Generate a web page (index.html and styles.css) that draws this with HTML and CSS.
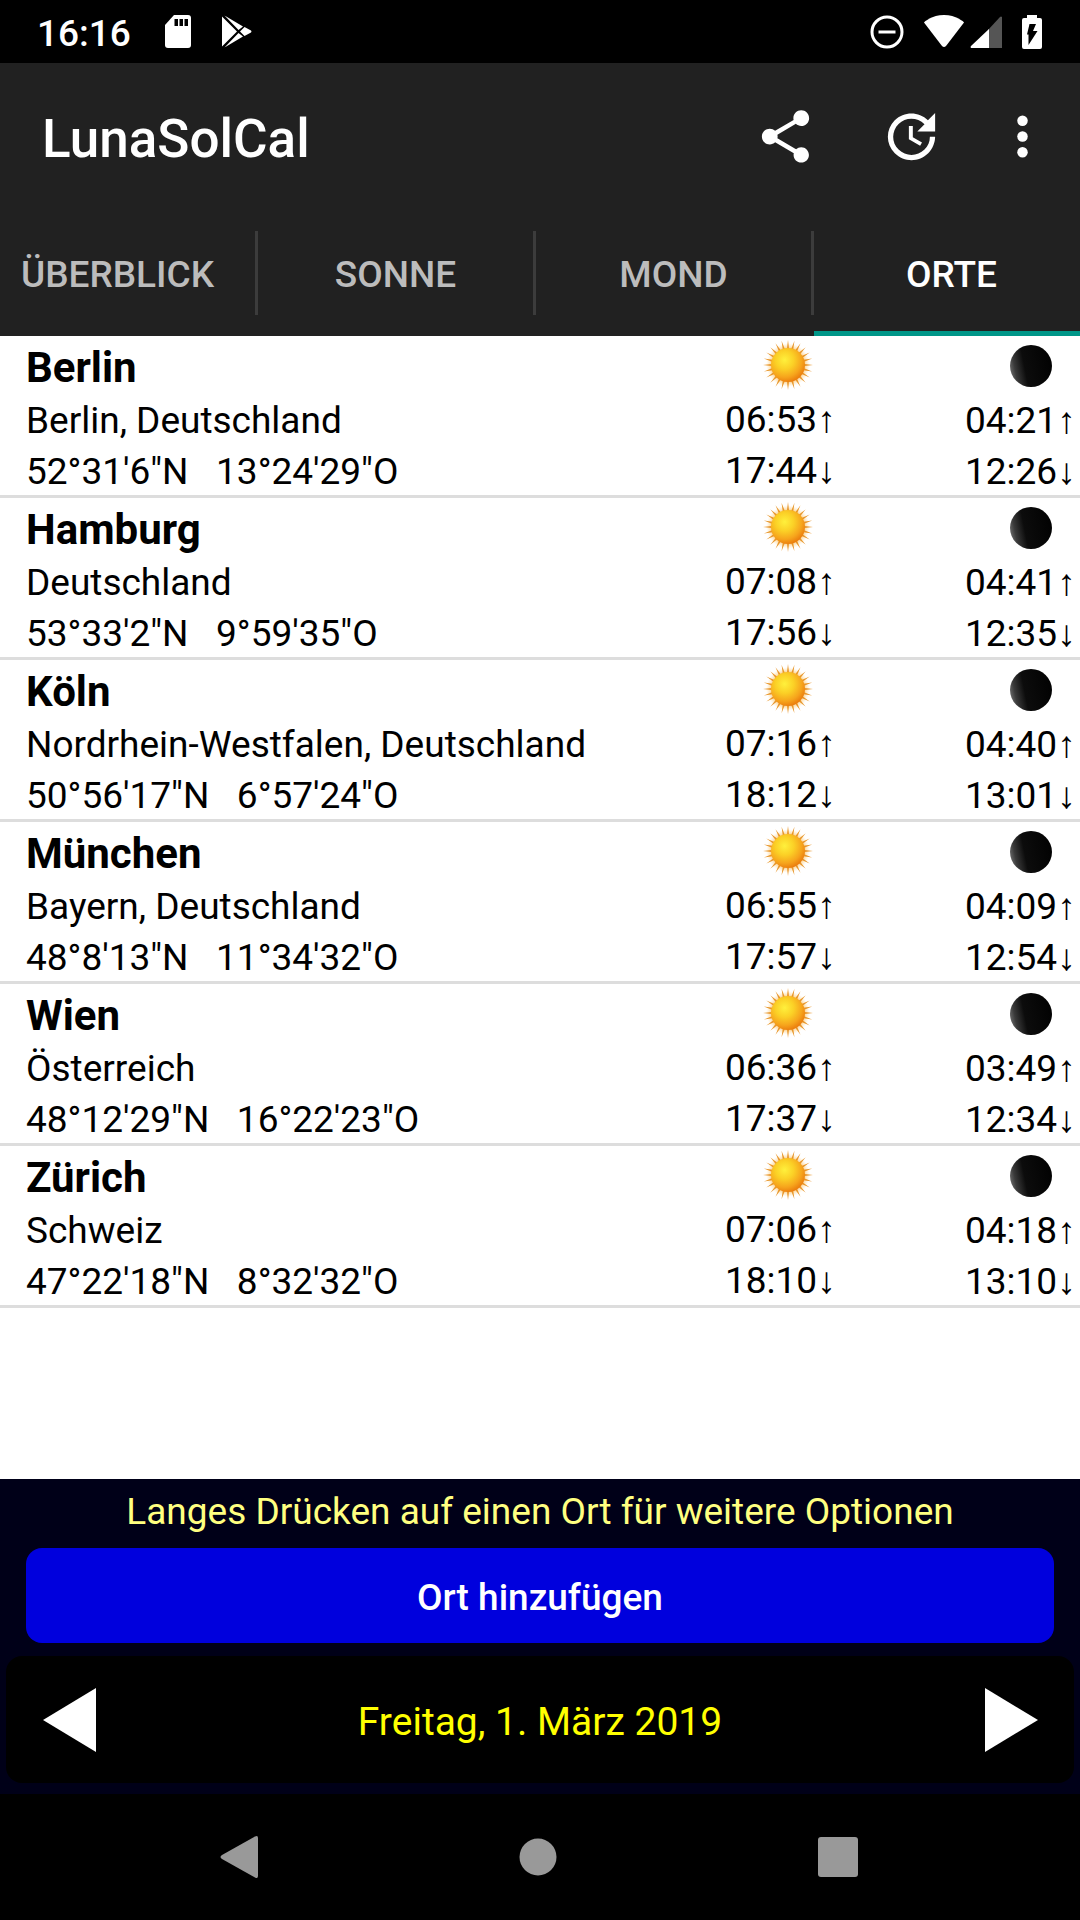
FILE: index.html
```html
<!DOCTYPE html>
<html lang="de">
<head>
<meta charset="utf-8">
<meta name="viewport" content="width=device-width, initial-scale=1">
<title>LunaSolCal</title>
<link rel="stylesheet" href="styles.css">
</head>
<body>
<svg class="defs" width="0" height="0" aria-hidden="true">
  <defs>
    <radialGradient id="sun-fill" cx="0.4" cy="0.35" r="0.68">
      <stop offset="0" stop-color="#fff03c"/>
      <stop offset="0.4" stop-color="#fbd026"/>
      <stop offset="0.75" stop-color="#f6a41c"/>
      <stop offset="1" stop-color="#ea7a0c"/>
    </radialGradient>
    <radialGradient id="sun-glow" cx="0.5" cy="0.5" r="0.5">
      <stop offset="0.7" stop-color="#f9b040" stop-opacity="0.8"/>
      <stop offset="1" stop-color="#ffe0a0" stop-opacity="0"/>
    </radialGradient>
    <linearGradient id="moon-fill" x1="0" y1="0.6" x2="1" y2="0.4">
      <stop offset="0" stop-color="#6a6a6a"/>
      <stop offset="0.12" stop-color="#3a3a3a"/>
      <stop offset="0.35" stop-color="#0c0c0c"/>
      <stop offset="1" stop-color="#020202"/>
    </linearGradient>
    <symbol id="sun" viewBox="-25 -25 50 50">
      <circle r="22" fill="url(#sun-glow)"/>
      <g fill="#e8962a">
        <path id="ray" d="M0-25L3 0 0 25-3 0Z"/>
        <use href="#ray" transform="rotate(15)"/>
        <use href="#ray" transform="rotate(30)"/>
        <use href="#ray" transform="rotate(45)"/>
        <use href="#ray" transform="rotate(60)"/>
        <use href="#ray" transform="rotate(75)"/>
        <use href="#ray" transform="rotate(90)"/>
        <use href="#ray" transform="rotate(105)"/>
        <use href="#ray" transform="rotate(120)"/>
        <use href="#ray" transform="rotate(135)"/>
        <use href="#ray" transform="rotate(150)"/>
        <use href="#ray" transform="rotate(165)"/>
      </g>
      <circle r="17" fill="url(#sun-fill)"/>
    </symbol>
    <symbol id="moon" viewBox="-25 -25 50 50">
      <circle r="21" fill="url(#moon-fill)"/>
    </symbol>
  </defs>
</svg>

<div class="status">
  <time class="clock">16:16</time>
  <svg class="status-sd" width="26" height="34" viewBox="0 0 26 34" aria-hidden="true">
    <path fill="#fff" d="M9 0H23a3 3 0 0 1 3 3V30a3 3 0 0 1-3 3H3a3 3 0 0 1-3-3V10Z"/>
    <path d="M9.500 4h3.500v7h-3.500zM14.500 4h3.500v7h-3.500zM19.500 4h3.500v7h-3.500z"/>
  </svg>
  <svg width="30" height="34" viewBox="0 0 30 34" fill="#fff" aria-hidden="true">
    <path d="M0 1.500 15 16.500 0 31.500ZM2.500.5 21 11.500 16.500 15ZM2.500 32.500 16.500 18 21 21.500ZM22.500 12 29 15.500q1 1 0 2L22.500 21 18 16.500Z"/>
  </svg>
  <div class="status-right">
    <svg class="status-dnd" width="34" height="34" viewBox="0 0 34 34" fill="none" stroke="#fff" stroke-width="3" aria-hidden="true">
      <circle cx="17" cy="17" r="15"/><path d="M8.500 17h17"/>
    </svg>
    <svg class="status-wifi" width="42" height="34" viewBox="0 0 42 34" aria-hidden="true">
      <path fill="#fff" d="M21 0C33 0 41 7 41 7.500L23 31q-2 2-4 0L1 7.500C1 7 9 0 21 0Z"/>
    </svg>
    <svg class="status-signal" width="32" height="32" viewBox="0 0 32 32" aria-hidden="true">
      <path fill="#555" d="M32 1V32H18V14L30 1q1-1 2 0Z"/>
      <path fill="#fff" d="M19 13V32H1q-1-1 0-2Z"/>
    </svg>
    <svg width="20" height="34" viewBox="0 0 20 34" aria-hidden="true">
      <path fill="#fff" d="M5 0h10v3h3a2 2 0 0 1 2 2v27a2 2 0 0 1-2 2H2a2 2 0 0 1-2-2V5a2 2 0 0 1 2-2h3z"/>
      <path d="M7.500 9H14L11 16h4.500L6.500 30V19.500H5Z"/>
    </svg>
  </div>
</div>

<header class="appbar">
  <h1 class="title">LunaSolCal</h1>
  <button class="action" type="button" aria-label="Teilen">
    <svg width="63" height="63" viewBox="0 0 24 24" fill="#fff"><path d="M18 16.080c-.76 0-1.440.3-1.960.77L8.910 12.700c.05-.23.09-.46.09-.7s-.04-.47-.09-.7l7.050-4.110c.54.5 1.250.81 2.040.81 1.660 0 3-1.340 3-3s-1.340-3-3-3-3 1.340-3 3c0 .24.04.47.09.7L8.040 9.810C7.500 9.310 6.790 9 6 9c-1.660 0-3 1.340-3 3s1.340 3 3 3c.79 0 1.500-.31 2.040-.81l7.120 4.160c-.05.21-.08.43-.08.65 0 1.610 1.310 2.920 2.920 2.920 1.610 0 2.920-1.310 2.920-2.920s-1.310-2.920-2.920-2.920z"/></svg>
  </button>
  <button class="action" type="button" aria-label="Aktualisieren">
    <svg width="63" height="63" viewBox="0 0 24 24" fill="#fff"><path d="M21 10.120h-6.780l2.740-2.820c-2.730-2.700-7.150-2.800-9.880-.1-2.730 2.710-2.730 7.080 0 9.790s7.150 2.710 9.880 0C18.320 15.650 19 14.080 19 12.100h2c0 1.980-.88 4.550-2.640 6.290-3.510 3.480-9.210 3.480-12.720 0-3.500-3.470-3.530-9.110-.02-12.580s9.140-3.470 12.650 0L21 3v7.120zM12.500 8v4.250l3.500 2.080-.72 1.210L11 13V8h1.500z"/></svg>
  </button>
  <button class="action action-more" type="button" aria-label="Mehr">
    <svg width="63" height="63" viewBox="0 0 24 24" fill="#fff"><circle cx="12" cy="6" r="2"/><circle cx="12" cy="12" r="2"/><circle cx="12" cy="18" r="2"/></svg>
  </button>
</header>

<div class="tabs">
  <nav class="tab-strip">
    <a class="tab" href="#ueberblick"><span class="tab-label">ÜBERBLICK</span></a>
    <a class="tab" href="#sonne"><span class="tab-label">SONNE</span></a>
    <a class="tab" href="#mond"><span class="tab-label">MOND</span></a>
    <a class="tab tab-active" href="#orte" aria-current="page"><span class="tab-label">ORTE</span></a>
  </nav>
</div>

<main class="places">
  <ul class="list">
    <li class="place">
      <div class="info"><h2 class="name">Berlin</h2><p class="line">Berlin, Deutschland</p><p class="line">52°31'6"N   13°24'29"O</p></div>
      <div class="times sun"><svg class="orb"><use href="#sun"/></svg><p class="line">06:53<span class="arrow">↑</span></p><p class="line">17:44<span class="arrow">↓</span></p></div>
      <div class="times moon"><svg class="orb"><use href="#moon"/></svg><p class="line">04:21<span class="arrow">↑</span></p><p class="line">12:26<span class="arrow">↓</span></p></div>
    </li>
    <li class="place">
      <div class="info"><h2 class="name">Hamburg</h2><p class="line">Deutschland</p><p class="line">53°33'2"N   9°59'35"O</p></div>
      <div class="times sun"><svg class="orb"><use href="#sun"/></svg><p class="line">07:08<span class="arrow">↑</span></p><p class="line">17:56<span class="arrow">↓</span></p></div>
      <div class="times moon"><svg class="orb"><use href="#moon"/></svg><p class="line">04:41<span class="arrow">↑</span></p><p class="line">12:35<span class="arrow">↓</span></p></div>
    </li>
    <li class="place">
      <div class="info"><h2 class="name">Köln</h2><p class="line">Nordrhein-Westfalen, Deutschland</p><p class="line">50°56'17"N   6°57'24"O</p></div>
      <div class="times sun"><svg class="orb"><use href="#sun"/></svg><p class="line">07:16<span class="arrow">↑</span></p><p class="line">18:12<span class="arrow">↓</span></p></div>
      <div class="times moon"><svg class="orb"><use href="#moon"/></svg><p class="line">04:40<span class="arrow">↑</span></p><p class="line">13:01<span class="arrow">↓</span></p></div>
    </li>
    <li class="place">
      <div class="info"><h2 class="name">München</h2><p class="line">Bayern, Deutschland</p><p class="line">48°8'13"N   11°34'32"O</p></div>
      <div class="times sun"><svg class="orb"><use href="#sun"/></svg><p class="line">06:55<span class="arrow">↑</span></p><p class="line">17:57<span class="arrow">↓</span></p></div>
      <div class="times moon"><svg class="orb"><use href="#moon"/></svg><p class="line">04:09<span class="arrow">↑</span></p><p class="line">12:54<span class="arrow">↓</span></p></div>
    </li>
    <li class="place">
      <div class="info"><h2 class="name">Wien</h2><p class="line">Österreich</p><p class="line">48°12'29"N   16°22'23"O</p></div>
      <div class="times sun"><svg class="orb"><use href="#sun"/></svg><p class="line">06:36<span class="arrow">↑</span></p><p class="line">17:37<span class="arrow">↓</span></p></div>
      <div class="times moon"><svg class="orb"><use href="#moon"/></svg><p class="line">03:49<span class="arrow">↑</span></p><p class="line">12:34<span class="arrow">↓</span></p></div>
    </li>
    <li class="place">
      <div class="info"><h2 class="name">Zürich</h2><p class="line">Schweiz</p><p class="line">47°22'18"N   8°32'32"O</p></div>
      <div class="times sun"><svg class="orb"><use href="#sun"/></svg><p class="line">07:06<span class="arrow">↑</span></p><p class="line">18:10<span class="arrow">↓</span></p></div>
      <div class="times moon"><svg class="orb"><use href="#moon"/></svg><p class="line">04:18<span class="arrow">↑</span></p><p class="line">13:10<span class="arrow">↓</span></p></div>
    </li>
  </ul>
</main>

<footer class="panel">
  <p class="hint">Langes Drücken auf einen Ort für weitere Optionen</p>
  <button class="add" type="button">Ort hinzufügen</button>
  <div class="date-bar">
    <button class="step" type="button" aria-label="Vorheriger Tag"><svg width="54" height="66" viewBox="0 0 54 66" fill="#fff"><path d="M54 1V65L1 33Z"/></svg></button>
    <button class="date" type="button">Freitag, 1. März 2019</button>
    <button class="step" type="button" aria-label="Nächster Tag"><svg width="54" height="66" viewBox="0 0 54 66" fill="#fff"><path d="M1 1V65L54 33Z"/></svg></button>
  </div>
</footer>

<nav class="navbar">
  <button class="nav-key" type="button" aria-label="Zurück"><svg width="42" height="42" viewBox="0 0 42 42" fill="#999"><path d="M37 .5q3-1.500 3 1.500V40q0 3-3 1.500L4 23q-3-2 0-4Z"/></svg></button>
  <button class="nav-key" type="button" aria-label="Startseite"><svg width="42" height="42" viewBox="0 0 42 42" fill="#999"><circle cx="21" cy="21" r="18.500"/></svg></button>
  <button class="nav-key" type="button" aria-label="Übersicht"><svg width="42" height="42" viewBox="0 0 42 42" fill="#999"><rect x="1" y="1" width="40" height="40" rx="3"/></svg></button>
</nav>
</body>
</html>
```
FILE: styles.css
```css
* {
  box-sizing: border-box;
}

body {
  margin: 0;
  min-height: 100vh;
  display: flex;
  flex-direction: column;
  background: #fff;
  color: #000;
  font-family: Roboto, "Noto Sans", sans-serif;
  font-size: 37px;
}

h1, h2, p, ul {
  margin: 0;
  padding: 0;
}

button {
  padding: 0;
  border: 0;
  background: none;
  color: inherit;
  font: inherit;
  cursor: pointer;
}

svg {
  display: block;
}

.defs {
  position: absolute;
}

/* System status bar */
.status {
  display: flex;
  align-items: center;
  height: 63px;
  padding: 0 38px 0 37px;
  background: #000;
  color: #fff;
}

.clock {
  padding-top: 3px;
  font-weight: 500;
}

.status-sd {
  margin: 0 31px 0 34px;
}

.status-right {
  display: flex;
  align-items: center;
  margin-left: auto;
}

.status-dnd {
  margin-right: 19px;
}

.status-wifi {
  margin-right: 5px;
}

.status-signal {
  margin-right: 20px;
}

/* App bar */
.appbar {
  display: flex;
  align-items: center;
  height: 147px;
  padding: 0 10px 0 42px;
  background: #212121;
  color: #fff;
}

.title {
  flex: 1;
  padding-top: 5px;
  font-size: 53px;
  font-weight: 500;
}

.action {
  display: flex;
  justify-content: center;
  width: 126px;
}

.action-more {
  width: 96px;
}

/* Tab strip, scrolled to its last tab */
.tabs {
  overflow: hidden;
  background: #212121;
}

.tab-strip {
  display: flex;
  height: 126px;
  margin: 0 -12px 0 -20px;
}

.tab {
  flex: 1;
  display: flex;
  align-items: center;
  color: #bcbcbc;
  font-weight: 500;
  text-decoration: none;
}

.tab-label {
  flex: 1;
  padding-top: 4px;
  border-right: 3px solid #3c3c3c;
  line-height: 80px;
  text-align: center;
}

.tab-active {
  color: #fff;
  box-shadow: inset 0 -5px #009688;
}

.tab-active .tab-label {
  border-right-color: transparent;
}

/* Places */
.places {
  flex: 1;
}

.list {
  list-style: none;
}

.place {
  display: grid;
  grid-template-columns: 1fr 240px 115px;
  padding-left: 26px;
  border-bottom: 3px solid #ddd;
}

.info,
.times {
  height: 159px;
}

.info {
  padding-top: 4px;
}

.name {
  font-size: 42px;
  font-weight: 700;
  line-height: 55px;
}

.line {
  line-height: 51px;
  white-space: pre;
}

.orb {
  width: 50px;
  height: 50px;
  margin-bottom: 4px;
}

.sun {
  padding-top: 4px;
}

.moon {
  padding-top: 5px;
}

.sun .orb {
  margin-left: 38px;
}

.moon .orb {
  margin-left: 41px;
}

.arrow {
  font-family: "Liberation Sans", sans-serif;
  line-height: 1;
}

/* Bottom panel */
.panel {
  padding-bottom: 11px;
  background: #000018;
}

.hint {
  padding: 7px 26px 11px;
  color: #ffff80;
  line-height: 51px;
  text-align: center;
}

.add {
  display: block;
  width: calc(100% - 52px);
  height: 95px;
  margin: 0 26px 13px;
  padding-top: 3px;
  border-radius: 16px;
  background: #00d;
  color: #fff;
  font-weight: 500;
}

.date-bar {
  display: flex;
  align-items: center;
  justify-content: space-between;
  height: 127px;
  margin: 0 6px;
  padding: 0 36px;
  border-radius: 16px;
  background: #000;
}

.date {
  padding-top: 4px;
  color: #ff0;
  font-size: 39px;
}

/* System navigation */
.navbar {
  display: grid;
  grid-template-columns: repeat(3, 1fr);
  justify-items: center;
  align-items: center;
  height: 126px;
  padding: 0 92px 0 89px;
  background: #000;
}
```
